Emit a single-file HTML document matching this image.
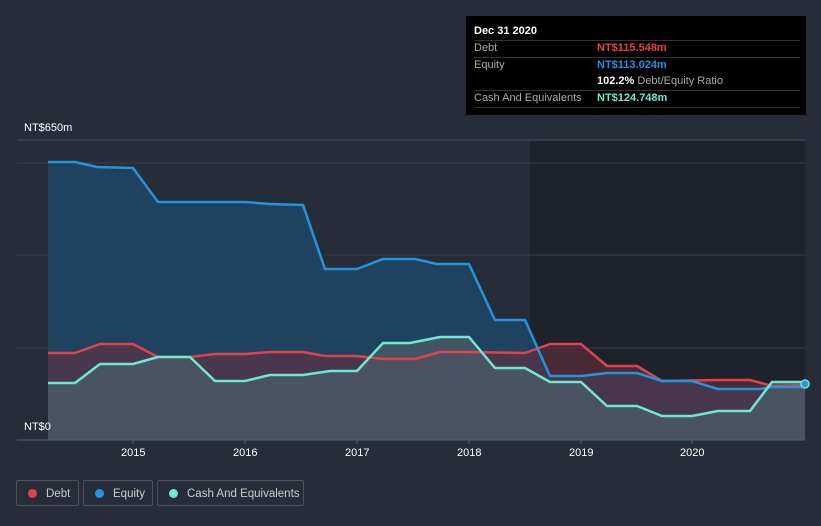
<!DOCTYPE html><html><head><style>
body{margin:0;width:821px;height:526px;background:#262d38;font-family:"Liberation Sans",sans-serif;overflow:hidden;position:relative}
.t{position:absolute;color:#fff;font-size:11px}
.tip{position:absolute;left:466px;top:16px;width:340px;height:99px;background:#000;font-size:11px;color:#aaa}
.tip div{position:absolute;left:8px;white-space:nowrap}
.ln{position:absolute;left:8px;width:326px;height:1px;background:#333}
.leg{position:absolute;top:480px;height:26px;border:1px solid #4a525e;border-radius:2px;color:#ccc;font-size:11.5px;line-height:26px;box-sizing:border-box;white-space:nowrap;overflow:hidden}
.leg i{display:inline-block;width:9px;height:9px;border-radius:50%;margin:0 9px 0 11px;vertical-align:-1px}
</style></head><body>
<svg width="821" height="526" style="position:absolute;left:0;top:0">
<rect x="530" y="140" width="275" height="300" fill="#1e232b"/>
<line x1="17" y1="140" x2="805" y2="140" stroke="#4a505a"/>
<line x1="17" y1="163" x2="805" y2="163" stroke="#3a404a"/>
<line x1="17" y1="255" x2="805" y2="255" stroke="#3a404a"/>
<line x1="17" y1="348" x2="805" y2="348" stroke="#3a404a"/>
<polygon fill="#1f4665" fill-opacity="0.85" points="48,440 48,162 75,162 97,167 133,168 158,202 245,202 270,204 303,205 325,269 357,269 383,259 415,259 437,264 469,264 495,320 525,320 550,376 581,376 607,373 637,373 662,381 692,381 718,389 760,389 772,387 805,387 805,440"/>
<polygon fill="#6b3040" fill-opacity="0.55" points="48,440 48,353 75,353 100,344 133,344 158,357 190,357 215,354 245,354 270,352 303,352 325,356 357,356 383,359 415,359 440,352 469,352 525,353 550,344 581,344 607,366 637,366 662,381 718,380 750,380 772,386 805,385 805,440"/>
<polygon fill="#4a5a66" fill-opacity="0.8" points="48,440 48,383 75,383 100,364 133,364 158,357 190,357 215,381 245,381 270,375 303,375 330,371 357,371 383,343 410,343 440,337 469,337 495,368 525,368 550,382 581,382 607,406 637,406 662,416 692,416 718,411 750,411 772,382 805,382 805,440"/>
<g fill="none" stroke-width="2.5" stroke-linejoin="round">
<polyline stroke="#e0424c" points="48,353 75,353 100,344 133,344 158,357 190,357 215,354 245,354 270,352 303,352 325,356 357,356 383,359 415,359 440,352 469,352 525,353 550,344 581,344 607,366 637,366 662,381 718,380 750,380 772,386 805,385"/>
<polyline stroke="#2394e0" points="48,162 75,162 97,167 133,168 158,202 245,202 270,204 303,205 325,269 357,269 383,259 415,259 437,264 469,264 495,320 525,320 550,376 581,376 607,373 637,373 662,381 692,381 718,389 760,389 772,387 805,387"/>
<polyline stroke="#6ee8d0" points="48,383 75,383 100,364 133,364 158,357 190,357 215,381 245,381 270,375 303,375 330,371 357,371 383,343 410,343 440,337 469,337 495,368 525,368 550,382 581,382 607,406 637,406 662,416 692,416 718,411 750,411 772,382 805,382"/>
</g>
<circle cx="805" cy="384" r="4" fill="#2394e0" stroke="#6ee8d0" stroke-width="1.5"/>
<line x1="17" y1="440" x2="805" y2="440" stroke="#5a606a"/>
<g stroke="#5a606a"><line x1="133" y1="440" x2="133" y2="444"/><line x1="245" y1="440" x2="245" y2="444"/><line x1="357" y1="440" x2="357" y2="444"/><line x1="469" y1="440" x2="469" y2="444"/><line x1="581" y1="440" x2="581" y2="444"/><line x1="692" y1="440" x2="692" y2="444"/></g>
</svg>
<div class="t" style="left:24px;top:122px">NT$650m</div>
<div class="t" style="left:24px;top:421px">NT$0</div>
<div class="t" style="left:121px;top:447px">2015</div>
<div class="t" style="left:233px;top:447px">2016</div>
<div class="t" style="left:345px;top:447px">2017</div>
<div class="t" style="left:457px;top:447px">2018</div>
<div class="t" style="left:569px;top:447px">2019</div>
<div class="t" style="left:680px;top:447px">2020</div>
<div class="tip">
<div style="top:9px;color:#fff;font-weight:bold">Dec 31 2020</div>
<div class="ln" style="top:24px"></div>
<div style="top:26px">Debt</div><div style="top:26px;left:131px;color:#e8404a;font-weight:bold">NT$115.548m</div>
<div class="ln" style="top:41px"></div>
<div style="top:43px">Equity</div><div style="top:43px;left:131px;color:#2394e0;font-weight:bold">NT$113.024m</div>
<div style="top:59px;left:131px"><b style="color:#fff">102.2%</b> Debt/Equity Ratio</div>
<div class="ln" style="top:74px"></div>
<div style="top:76px">Cash And Equivalents</div><div style="top:76px;left:131px;color:#6ee8d0;font-weight:bold">NT$124.748m</div>
<div class="ln" style="top:91px"></div>
</div>
<div class="leg" style="left:16px;width:63px"><i style="background:#e8404a"></i>Debt</div>
<div class="leg" style="left:83px;width:70px"><i style="background:#2394e0"></i>Equity</div>
<div class="leg" style="left:157px;width:147px"><i style="background:#6ee8d0"></i>Cash And Equivalents</div>
</body></html>
